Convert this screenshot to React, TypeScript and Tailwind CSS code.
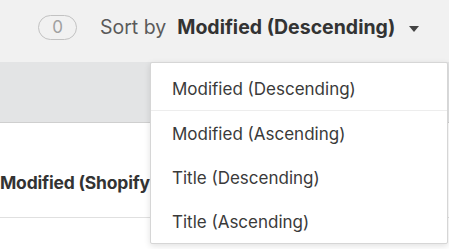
const options = [
  "Modified (Descending)",
  "Modified (Ascending)",
  "Title (Descending)",
  "Title (Ascending)",
];

export default function App() {
  return (
    <div
      className="relative h-[249px] w-[449px] overflow-hidden bg-white"
      style={{ fontFamily: "Inter, 'Liberation Sans', sans-serif" }}
    >
      {/* toolbar */}
      <div className="flex h-[62px] items-center bg-[#f1f1f1] pb-[7px] pl-[38px]">
        <span className="flex h-[25px] w-[39px] items-center justify-center rounded-full border border-[#c2c2c2] text-[17px] text-[#a0a0a0]">
          0
        </span>
        <span className="ml-[23px] text-[19.5px] text-[#5a5a5a]">Sort by</span>
        <span className="ml-[11px] text-[19.5px] font-bold text-[#333]">Modified (Descending)</span>
        <svg className="ml-[14px] mt-[2px]" width="10" height="6" viewBox="0 0 10 6">
          <path d="M0 0h10L5 6z" fill="#444" />
        </svg>
      </div>

      {/* table header band */}
      <div className="h-[61px] border-b border-[#cfcfcf] bg-[#e3e4e5]" />

      {/* table row, mostly hidden under the menu */}
      <div className="h-[95px] border-b border-[#e0e0e0]">
        <div className="flex h-full w-[150px] items-center overflow-hidden pt-[26px]">
          <span className="whitespace-nowrap text-[17.5px] font-bold tracking-[-0.2px] text-[#333]">
            Modified (Shopify
          </span>
        </div>
      </div>

      {/* dropdown menu */}
      <div className="absolute left-[150px] top-[62px] w-[298px] rounded-[2px] border border-[#d6d6d6] bg-white shadow-[0_2px_6px_rgba(0,0,0,0.12)]">
        {options.map((o, i) => (
          <div
            key={o}
            className={`flex items-center pl-[21px] text-[17px] text-[#3a3a3a] ${
              i === 0 ? "h-[48px] border-b border-[#ededed] pt-[6px]" : "h-[44px] pt-[3px]"
            }`}
          >
            {o}
          </div>
        ))}
      </div>
    </div>
  );
}
